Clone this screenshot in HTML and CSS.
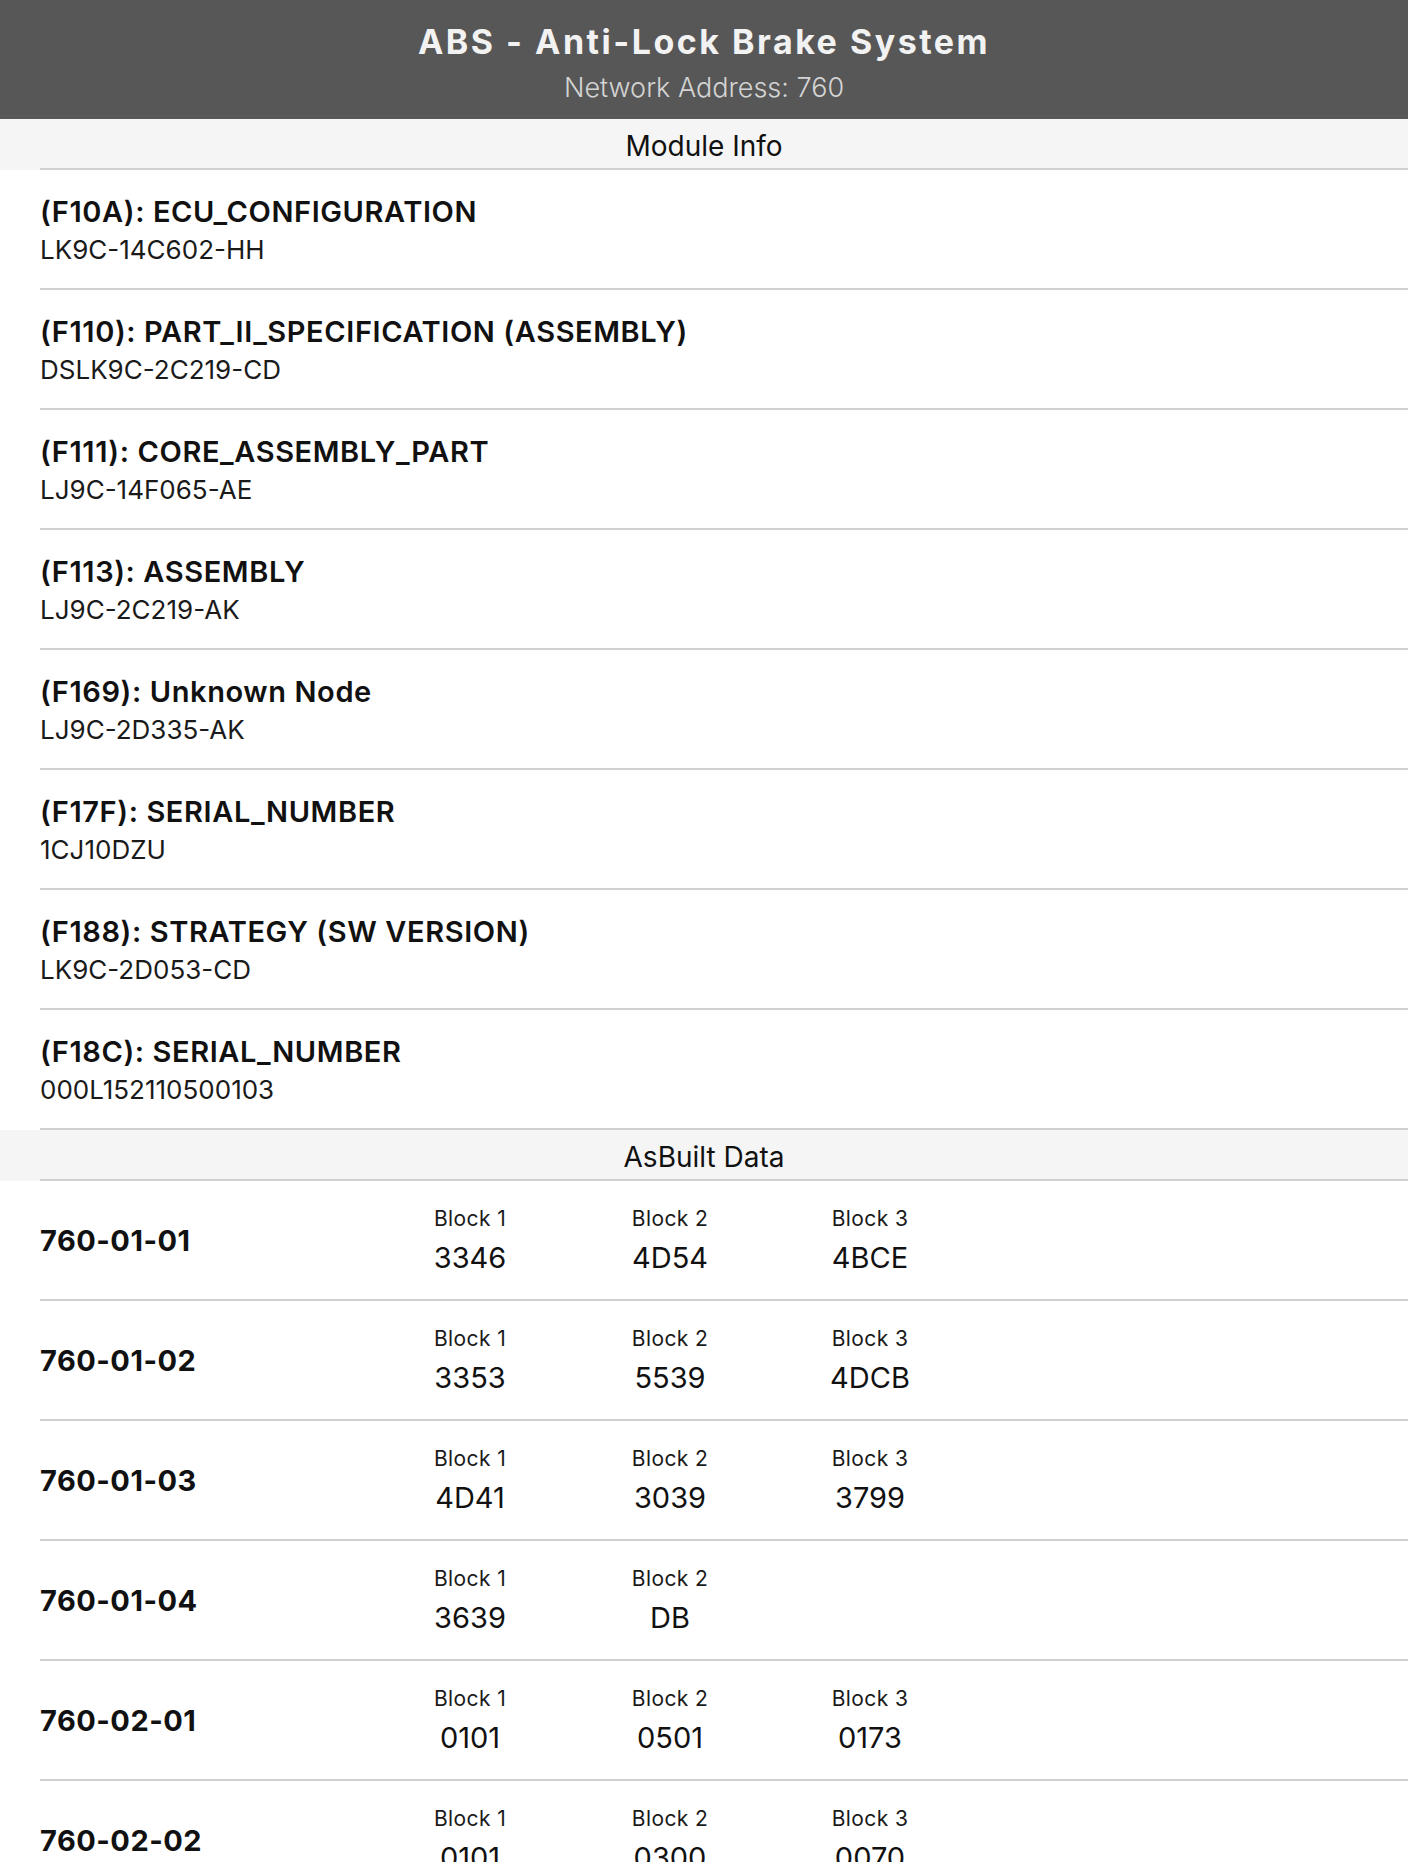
FILE: index.html
```html
<!doctype html>
<html lang="en">
<head>
	<meta charset="UTF-8">
	<title>ABS - Anti-Lock Brake System</title>
	<link rel="stylesheet" href="styles.css">
</head>
<body>
	<div id="module">
		<div class="topbar">
			<div class="title">ABS - Anti-Lock Brake System</div>
			<div class="subtitle">Network Address: 760</div>
		</div>

		<div class="sec-head"><div class="sec-title">Module Info</div></div>
		<div class="list">
			<div class="info-row">
				<div class="info-name">(F10A): ECU_CONFIGURATION</div>
				<div class="info-value">LK9C-14C602-HH</div>
			</div>
			<div class="info-row">
				<div class="info-name">(F110): PART_II_SPECIFICATION (ASSEMBLY)</div>
				<div class="info-value">DSLK9C-2C219-CD</div>
			</div>
			<div class="info-row">
				<div class="info-name">(F111): CORE_ASSEMBLY_PART</div>
				<div class="info-value">LJ9C-14F065-AE</div>
			</div>
			<div class="info-row">
				<div class="info-name">(F113): ASSEMBLY</div>
				<div class="info-value">LJ9C-2C219-AK</div>
			</div>
			<div class="info-row">
				<div class="info-name">(F169): Unknown Node</div>
				<div class="info-value">LJ9C-2D335-AK</div>
			</div>
			<div class="info-row">
				<div class="info-name">(F17F): SERIAL_NUMBER</div>
				<div class="info-value">1CJ10DZU</div>
			</div>
			<div class="info-row">
				<div class="info-name">(F188): STRATEGY (SW VERSION)</div>
				<div class="info-value">LK9C-2D053-CD</div>
			</div>
			<div class="info-row">
				<div class="info-name">(F18C): SERIAL_NUMBER</div>
				<div class="info-value">000L152110500103</div>
			</div>
		</div>

		<div class="sec-head"><div class="sec-title">AsBuilt Data</div></div>
		<div class="list">
			<div class="ab-row">
				<div class="ab-name">760-01-01</div>
				<div class="block"><div class="block-label">Block 1</div><div class="block-value">3346</div></div>
				<div class="block"><div class="block-label">Block 2</div><div class="block-value">4D54</div></div>
				<div class="block"><div class="block-label">Block 3</div><div class="block-value">4BCE</div></div>
			</div>
			<div class="ab-row">
				<div class="ab-name">760-01-02</div>
				<div class="block"><div class="block-label">Block 1</div><div class="block-value">3353</div></div>
				<div class="block"><div class="block-label">Block 2</div><div class="block-value">5539</div></div>
				<div class="block"><div class="block-label">Block 3</div><div class="block-value">4DCB</div></div>
			</div>
			<div class="ab-row">
				<div class="ab-name">760-01-03</div>
				<div class="block"><div class="block-label">Block 1</div><div class="block-value">4D41</div></div>
				<div class="block"><div class="block-label">Block 2</div><div class="block-value">3039</div></div>
				<div class="block"><div class="block-label">Block 3</div><div class="block-value">3799</div></div>
			</div>
			<div class="ab-row">
				<div class="ab-name">760-01-04</div>
				<div class="block"><div class="block-label">Block 1</div><div class="block-value">3639</div></div>
				<div class="block"><div class="block-label">Block 2</div><div class="block-value">DB</div></div>
			</div>
			<div class="ab-row">
				<div class="ab-name">760-02-01</div>
				<div class="block"><div class="block-label">Block 1</div><div class="block-value">0101</div></div>
				<div class="block"><div class="block-label">Block 2</div><div class="block-value">0501</div></div>
				<div class="block"><div class="block-label">Block 3</div><div class="block-value">0173</div></div>
			</div>
			<div class="ab-row">
				<div class="ab-name">760-02-02</div>
				<div class="block"><div class="block-label">Block 1</div><div class="block-value">0101</div></div>
				<div class="block"><div class="block-label">Block 2</div><div class="block-value">0300</div></div>
				<div class="block"><div class="block-label">Block 3</div><div class="block-value">0070</div></div>
			</div>
		</div>
	</div>
</body>
</html>
```

FILE: styles.css
```css
body{
	margin: 0;
	font-family: Inter, "Noto Sans", sans-serif;
	color: #111;
	background: #fff;
	overflow: hidden;
}
.topbar{
	height: 119px;
	background: #575757;
	text-align: center;
	box-sizing: border-box;
	padding-top: 20px;
}
.title{
	font-size: 34px;
	line-height: 44px;
	font-weight: 700;
	letter-spacing: 2.5px;
	color: #f2f2f2;
}
.subtitle{
	font-size: 27px;
	line-height: 32px;
	font-weight: 300;
	color: #d4d4d4;
	margin-top: 8px;
}
.sec-head{
	background: #f5f5f5;
	padding-left: 40px;
}
.sec-title{/* 边框从40px开始，文字仍居中 */
	height: 51px;
	box-sizing: border-box;
	border-bottom: 2px solid #d0d0d0;
	padding: 4px 40px 0 0;
	display: flex;
	align-items: center;
	justify-content: center;
	font-size: 28px;
	color: #111;
}
.list{
	padding-left: 40px;
}
.info-row{
	height: 120px;
	box-sizing: border-box;
	border-bottom: 2px solid #d0d0d0;
	padding-top: 25px;
}
.info-name{
	font-size: 29px;
	line-height: 34px;
	font-weight: 600;
	letter-spacing: 0.6px;
}
.info-value{
	font-size: 26px;
	line-height: 32px;
	margin-top: 5px;
	color: #1a1a1a;
}
.ab-row{
	height: 120px;
	box-sizing: border-box;
	border-bottom: 2px solid #d0d0d0;
	display: flex;
	align-items: center;
}
.ab-name{
	width: 330px;
	font-size: 29px;
	font-weight: 700;
	letter-spacing: 0.5px;
}
.block{
	width: 200px;
	text-align: center;
	display: flex;
	flex-direction: column;
	gap: 9px;
}
.block-label{
	font-size: 21px;
	line-height: 26px;
	letter-spacing: 0.4px;
	color: #1a1a1a;
}
.block-value{
	font-size: 29px;
	line-height: 34px;
}
```
